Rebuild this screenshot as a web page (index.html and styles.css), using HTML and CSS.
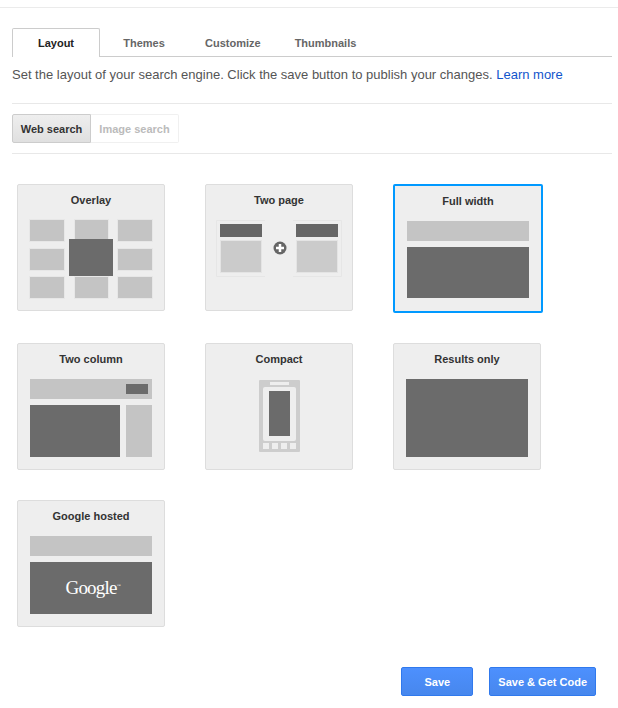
FILE: index.html
```html
<!DOCTYPE html>
<html lang="en">
<head>
  <meta charset="UTF-8"/>
  <meta name="viewport" content="width=device-width, initial-scale=1.0"/>
  <title>Layout</title>
  <link rel="stylesheet" href="styles.css">
</head>
<body>
<div class="top-rule"></div>

<div class="tabs">
  <a class="tab active">Layout</a>
  <a class="tab">Themes</a>
  <a class="tab">Customize</a>
  <a class="tab">Thumbnails</a>
</div>

<p class="intro">Set the layout of your search engine. Click the save button to publish your changes. <a href="#">Learn more</a></p>

<div class="toggle-row">
  <button class="toggle on">Web search</button><button class="toggle">Image search</button>
</div>

<div class="layouts">
  <div class="card">
    <div class="card-title">Overlay</div>
    <svg width="122" height="78" viewBox="0 0 122 78">
      <g class="light outlined">
        <rect width="34" height="21"/><rect x="45" width="33" height="21"/><rect x="88" width="34" height="21"/>
        <rect y="29" width="34" height="21"/><rect x="88" y="29" width="34" height="21"/>
        <rect y="57" width="34" height="21"/><rect x="45" y="57" width="33" height="21"/><rect x="88" y="57" width="34" height="21"/>
      </g>
      <rect class="dark" x="39" y="19" width="44" height="37"/>
    </svg>
  </div>

  <div class="card">
    <div class="card-title">Two page</div>
    <svg width="126" height="57" viewBox="0 0 126 57">
      <path class="frame" d="M49 .5H.5v56H49"/>
      <rect class="darker" x="4" y="4" width="42" height="13"/>
      <rect class="pale" x="4.5" y="20.5" width="41" height="32"/>
      <circle class="darker" cx="64" cy="28" r="6.5"/>
      <path class="plus" d="M64 24v8M60 28h8"/>
      <path class="frame" d="M77 .5h48.500v56H77"/>
      <rect class="darker" x="80" y="4" width="42" height="13"/>
      <rect class="pale" x="80.500" y="20.500" width="41" height="32"/>
    </svg>
  </div>

  <div class="card selected">
    <div class="card-title">Full width</div>
    <svg width="122" height="77" viewBox="0 0 122 77">
      <rect class="light" width="122" height="20"/>
      <rect class="dark" y="26" width="122" height="51"/>
    </svg>
  </div>

  <div class="card">
    <div class="card-title">Two column</div>
    <svg width="122" height="78" viewBox="0 0 122 78">
      <rect class="light" width="122" height="20"/>
      <rect class="dark" x="96" y="5" width="22" height="10"/>
      <rect class="dark" y="26" width="90" height="52"/>
      <rect class="light" x="96" y="26" width="26" height="52"/>
    </svg>
  </div>

  <div class="card">
    <div class="card-title">Compact</div>
    <svg width="41" height="73" viewBox="0 -1 41 73">
      <rect class="phone" width="41" height="72" rx="1"/>
      <rect class="blank" x="4" y="7" width="33" height="54" rx="2"/>
      <rect class="dark" x="10" y="11" width="21" height="45"/>
      <rect class="blank" x="11" y="2" width="19" height="3"/>
      <g class="blank">
        <rect x="4" y="63" width="6" height="6"/><rect x="13" y="63" width="6" height="6"/>
        <rect x="22" y="63" width="6" height="6"/><rect x="31" y="63" width="6" height="6"/>
      </g>
    </svg>
  </div>

  <div class="card">
    <div class="card-title">Results only</div>
    <svg width="122" height="78" viewBox="0 0 122 78">
      <rect class="dark" width="122" height="78"/>
    </svg>
  </div>

  <div class="card">
    <div class="card-title">Google hosted</div>
    <svg width="122" height="78" viewBox="0 0 122 78">
      <rect class="light" width="122" height="20"/>
      <rect class="dark" y="26" width="122" height="52"/>
      <text class="logo" x="35.500" y="58">Google<tspan class="tm" dy="-7">™</tspan></text>
    </svg>
  </div>
</div>

<div class="actions">
  <button class="btn">Save</button>
  <button class="btn">Save &amp; Get Code</button>
</div>
</body>
</html>
```

FILE: styles.css
```css
body {
  margin: 0;
  padding-top: 7px;
  font-family: "Liberation Sans", Arial, sans-serif;
  background: white;
  color: #555;
}

.top-rule {
  border-top: 1px solid #ebebeb;
}

.tabs {
  display: flex;
  height: 28px;
  margin: 20px 6px 0 12px;
  border-bottom: 1px solid #ccc;
}

.tab {
  box-sizing: border-box;
  min-width: 88px;
  height: 29px;
  padding: 0 16px;
  border: 1px solid transparent;
  border-bottom: 0;
  font-size: 11px;
  font-weight: bold;
  line-height: 28px;
  text-align: center;
  color: #666;
}

.tab.active {
  border-color: #ccc;
  border-radius: 2px 2px 0 0;
  background: white;
  color: #222;
}

.intro {
  height: 38px;
  margin: 0 6px 0 12px;
  padding-top: 8px;
  border-bottom: 1px solid #e8e8e8;
  font-size: 13px;
  line-height: 20px;
}

.intro a {
  color: #15c;
  text-decoration: none;
}

.toggle-row {
  display: flex;
  margin: 0 6px 0 12px;
  padding: 10px 0;
  border-bottom: 1px solid #e8e8e8;
}

.toggle {
  box-sizing: border-box;
  width: 88px;
  height: 29px;
  padding: 0;
  border: 1px solid #f0f0f0;
  border-left: 0;
  border-radius: 0 2px 2px 0;
  background: white;
  font-family: inherit;
  font-size: 11px;
  font-weight: bold;
  color: #bbb;
}

.toggle.on {
  width: 79px;
  border: 1px solid #ccc;
  border-radius: 2px 0 0 2px;
  background: linear-gradient(#eee, #e0e0e0);
  color: #333;
}

.layouts {
  display: grid;
  grid-template-columns: repeat(3, 148px);
  gap: 30px 40px;
  align-items: start;
  padding: 30px 0 0 17px;
}

.card {
  box-sizing: border-box;
  display: flex;
  flex-direction: column;
  align-items: center;
  width: 148px;
  height: 127px;
  padding-top: 8px;
  border: 1px solid #ddd;
  border-radius: 2px;
  background: #eee;
}

.card.selected {
  width: 150px;
  height: 129px;
  border: 2px solid #09f;
}

.card-title {
  height: 14px;
  margin-bottom: 13px;
  font-size: 11px;
  font-weight: bold;
  line-height: 14px;
  color: #333;
}

.card svg {
  display: block;
  flex: none;
  overflow: visible;
}

.light { fill: #c4c4c4; }
.dark { fill: #6b6b6b; }
.darker { fill: #666; }
.blank { fill: #eee; }
.phone { fill: #cdcdcd; }

.outlined rect {
  stroke: #e7e7e7;
  stroke-width: 2;
  paint-order: stroke;
}

.pale {
  fill: #cbcbcb;
  stroke: #e4e4e4;
}

.frame {
  fill: none;
  stroke: #e6e6e6;
}

.plus {
  fill: none;
  stroke: white;
  stroke-width: 2.5;
}

.logo {
  fill: white;
  font-family: "Liberation Serif", serif;
  font-size: 19px;
  letter-spacing: -0.8px;
}

.tm {
  font-size: 4px;
}

.actions {
  display: flex;
  justify-content: flex-end;
  gap: 16px;
  padding: 40px 22px 0 0;
}

.btn {
  height: 29px;
  min-width: 72px;
  padding: 0 8px;
  border: 1px solid #3079ed;
  border-radius: 2px;
  background: linear-gradient(#4d90fe, #4787ed);
  font-family: inherit;
  font-size: 11px;
  font-weight: bold;
  color: white;
}
```
